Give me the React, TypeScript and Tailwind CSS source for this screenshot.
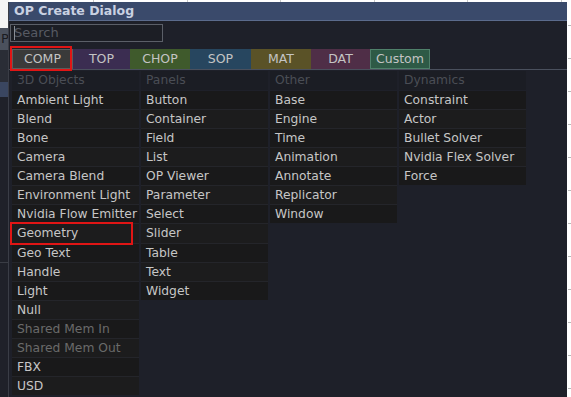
import React from "react";

const font = { fontFamily: '"DejaVu Sans", Verdana, sans-serif' };

type Item = { t: string; dim?: boolean };

const cols: { head: string; items: Item[] }[] = [
  {
    head: "3D Objects",
    items: [
      { t: "Ambient Light" },
      { t: "Blend" },
      { t: "Bone" },
      { t: "Camera" },
      { t: "Camera Blend" },
      { t: "Environment Light" },
      { t: "Nvidia Flow Emitter" },
      { t: "Geometry" },
      { t: "Geo Text" },
      { t: "Handle" },
      { t: "Light" },
      { t: "Null" },
      { t: "Shared Mem In", dim: true },
      { t: "Shared Mem Out", dim: true },
      { t: "FBX" },
      { t: "USD" },
    ],
  },
  {
    head: "Panels",
    items: [
      { t: "Button" },
      { t: "Container" },
      { t: "Field" },
      { t: "List" },
      { t: "OP Viewer" },
      { t: "Parameter" },
      { t: "Select" },
      { t: "Slider" },
      { t: "Table" },
      { t: "Text" },
      { t: "Widget" },
    ],
  },
  {
    head: "Other",
    items: [
      { t: "Base" },
      { t: "Engine" },
      { t: "Time" },
      { t: "Animation" },
      { t: "Annotate" },
      { t: "Replicator" },
      { t: "Window" },
    ],
  },
  {
    head: "Dynamics",
    items: [
      { t: "Constraint" },
      { t: "Actor" },
      { t: "Bullet Solver" },
      { t: "Nvidia Flex Solver" },
      { t: "Force" },
    ],
  },
];

const tabs = [
  { t: "COMP", cls: "w-[61px] bg-[#3a3a3a] border-[#5c5c5c]" },
  { t: "TOP", cls: "w-[57px] bg-[#3b2d51] border-[#3b2d51]" },
  { t: "CHOP", cls: "w-[60px] bg-[#3f5a2c] border-[#3f5a2c]" },
  { t: "SOP", cls: "w-[61px] bg-[#27465f] border-[#27465f]" },
  { t: "MAT", cls: "w-[60px] bg-[#5a5227] border-[#5a5227]" },
  { t: "DAT", cls: "w-[59px] bg-[#4f2e47] border-[#4f2e47]" },
  { t: "Custom", cls: "w-[60px] bg-[#2e5a46] border-[#4f806a]" },
];

const ticks = [25, 58, 91, 124, 157, 190, 223, 256, 289, 322, 355, 388];

export default function App() {
  return (
    <div className="relative w-[571px] h-[397px] overflow-hidden bg-white" style={font}>
      {/* background app strip on the left */}
      <div className="absolute left-0 top-0 w-[9px] h-[397px] flex flex-col">
        <div className="h-[28px] bg-[#f4f4f4]" />
        <div className="h-[22px] bg-[#4b515d] text-[#1a1c22] text-[13px] leading-[22px] pl-[1px] overflow-hidden">P</div>
        <div className="h-[32px] bg-[#2a2d36]" />
        <div className="h-[15px] bg-[#3a4660]" />
        <div className="h-[166px] bg-[#1f2129] border-b border-[#3a3d45]" />
        <div className="flex-1 bg-[#1f2129]" />
      </div>
      {/* top strip lines */}
      {[93, 187, 280, 374, 467, 561].map((x) => (
        <div key={x} className="absolute top-0 w-px h-[2px] bg-[#c8c8c8]" style={{ left: x }} />
      ))}
      {/* right tick marks */}
      {ticks.map((y) => (
        <div key={y} className="absolute left-[568px] w-[4px] h-px bg-[#b8b8b8]" style={{ top: y }} />
      ))}

      {/* Dialog */}
      <div className="absolute left-[8px] top-[2px] w-[559px] h-[395px] bg-[#1e2029] border-l border-[#3a3d46] flex flex-col">
        <div className="h-[19px] bg-[#3a4a6b] border-b border-[#5b6b8c] text-[#c9d1e2] font-bold text-[12.5px] leading-[18px] pl-[5px]">
          OP Create Dialog
        </div>
        <div className="pl-[1px] pt-[3px] flex flex-col">
          <div className="relative w-[153px] h-[18px] border border-[#5b5f68] bg-[#1c1e25] text-[#575a63] text-[13px] leading-[16px] pl-[3px]">
            Search
            <div className="absolute left-[3px] top-[1px] w-px h-[14px] bg-[#8a8d95]" />
          </div>
          <div className="mt-[7px] pl-[2px] flex">
            {tabs.map((tb) => (
              <div
                key={tb.t}
                className={`h-[20px] border text-[#c4c4c4] text-[12.5px] leading-[18px] text-center ${tb.cls}`}
              >
                {tb.t}
              </div>
            ))}
          </div>
          <div className="h-px bg-[#4a505d] -ml-[1px]" />
          <div className="pl-[2px] pt-px flex gap-[2px] items-start">
            {cols.map((c) => (
              <div key={c.head} className="w-[127px] flex flex-col">
                <div className="h-[19px] bg-[#1b1d24] text-[#4a4d55] text-[12.3px] leading-[19px] pl-[5px] mb-px">
                  {c.head}
                </div>
                <div className="flex flex-col gap-px bg-[#24252a]">
                  {c.items.map((it, i) => (
                    <div
                      key={it.t}
                      className={`h-[18.07px] text-[12.3px] leading-[18px] pl-[5px] whitespace-nowrap overflow-hidden ${
                        i % 2 === 0 ? "bg-[#19191a]" : "bg-[#1c1c1d]"
                      } ${it.dim ? "text-[#6a6a6a]" : "text-[#c6c6c6]"}`}
                    >
                      {it.t}
                    </div>
                  ))}
                </div>
              </div>
            ))}
          </div>
        </div>
      </div>

      {/* red highlight boxes */}
      <div className="absolute left-[10px] top-[46px] w-[62px] h-[25px] border-2 border-[#e01515]" />
      <div className="absolute left-[10px] top-[222px] w-[123px] h-[23px] border-2 border-[#e01515]" />
    </div>
  );
}
